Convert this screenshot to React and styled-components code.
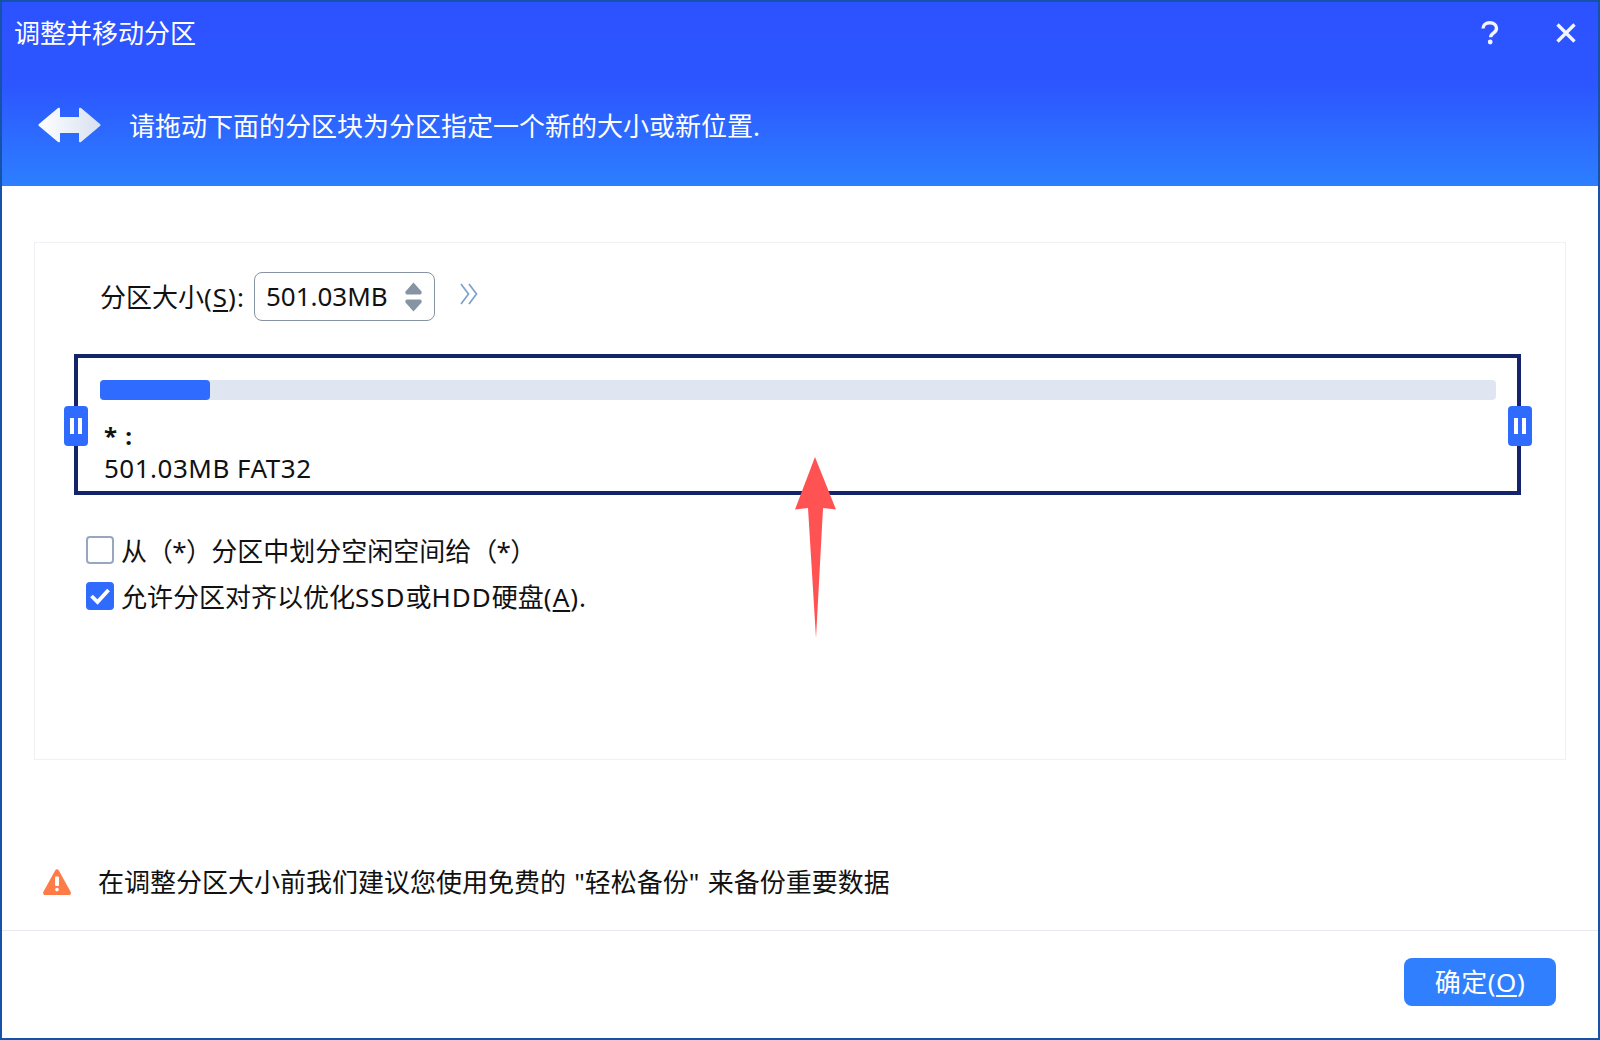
import React from "react";
import styled, { createGlobalStyle } from "styled-components";

const GlobalStyle = createGlobalStyle`
  html, body {
    margin: 0;
    padding: 0;
    background: #ffffff;
  }
  * {
    box-sizing: border-box;
  }
`;

const App = () => {
  return (
    <>
      <GlobalStyle />
      <Window>
        <Header>
          <TitleBar>
            <Title>调整并移动分区</Title>
            <WinButtons>
              <svg width="18" height="24" viewBox="0 0 18 24">
                <path d="M2 7.500C2 4 5 1.700 8.800 1.700c3.900 0 6.700 2.200 6.700 5.600 0 2.400-1.300 3.600-3.200 4.900-1.700 1.100-2.600 2-2.600 4.100" fill="none" stroke="#f2f4ff" strokeWidth="3.400" />
                <circle cx="9.200" cy="21" r="2.400" fill="#f2f4ff" />
              </svg>
              <svg width="20" height="20" viewBox="0 0 20 20">
                <path d="M1.500 1.500l17 17M18.500 1.500l-17 17" fill="none" stroke="#f2f4ff" strokeWidth="3.400" />
              </svg>
            </WinButtons>
          </TitleBar>
          <InfoRow>
            <svg width="63" height="36" viewBox="0 0 63 36">
              <defs>
                <linearGradient id="moveGrad" x1="0" x2="1" y1="0" y2="0">
                  <stop offset="0" stopColor="#ffffff" />
                  <stop offset="1" stopColor="#d8e0f0" />
                </linearGradient>
              </defs>
              <path
                d="M20 1L1 17c-.8.7-.8 1.400 0 2l19 16c.8.7 2 .3 2-.8V26h19v8.200c0 1.100 1.200 1.500 2 .8l19-16c.8-.6.8-1.300 0-2L43 1c-.8-.7-2-.3-2 .8V10H22V1.800C22 .7 20.800.3 20 1z"
                fill="url(#moveGrad)"
              />
            </svg>
            <InfoText>请拖动下面的分区块为分区指定一个新的大小或新位置.</InfoText>
          </InfoRow>
        </Header>

        <Body>
          <Panel>
            <SizeRow>
              <span>分区大小<Latin>(<u>S</u>):</Latin></span>
              <SizeInput>
                <SizeValue>501.03MB</SizeValue>
                <Spinner>
                  <svg width="17" height="13" viewBox="0 0 17 13">
                    <path d="M8.500 0.500L16.500 9.500Q17 12.500 15 12.500H2Q0 12.500 0.500 9.500Z" fill="#8593a3" />
                  </svg>
                  <svg width="17" height="13" viewBox="0 0 17 13">
                    <path d="M8.500 12.500L16.500 3.500Q17 0.500 15 0.500H2Q0 0.500 0.500 3.500Z" fill="#8593a3" />
                  </svg>
                </Spinner>
              </SizeInput>
              <MoreIcon width="18" height="22" viewBox="0 0 18 22">
                <path d="M1 1l7.500 10L1 21M9 1l7.500 10L9 21" fill="none" stroke="#7f9fce" strokeWidth="1.700" />
              </MoreIcon>
            </SizeRow>

            <PartitionBox>
              <UsageTrack>
                <UsageFill />
              </UsageTrack>
              <DriveName>* :</DriveName>
              <DriveInfo>501.03MB FAT32</DriveInfo>
              <Handle $side="left"><i /><i /></Handle>
              <Handle $side="right"><i /><i /></Handle>
            </PartitionBox>

            <Options>
              <Option>
                <CheckBox />
                <OptionText>从<Paren>（*）</Paren>分区中划分空闲空间给<Paren>（*）</Paren></OptionText>
              </Option>
              <Option>
                <CheckBox $checked>
                  <svg width="22" height="18" viewBox="0 0 22 18">
                    <path d="M2.500 9l6 6L19.500 3" fill="none" stroke="#ffffff" strokeWidth="3.800" />
                  </svg>
                </CheckBox>
                <OptionText>允许分区对齐以优化<Latin>SSD</Latin>或<Latin>HDD</Latin>硬盘<Latin>(<u>A</u>).</Latin></OptionText>
              </Option>
            </Options>
          </Panel>

          <Warning>
            <svg width="28" height="26" viewBox="0 0 28 26">
              <path
                d="M12.300 1.200c.8-1.400 2.600-1.400 3.400 0l11.900 21.600c.8 1.400-.1 3.200-1.700 3.200H2.100C.5 26-.4 24.200.4 22.800z"
                fill="#ff7b47"
              />
              <rect x="12" y="7.500" width="4" height="9.500" rx="1" fill="#ffffff" />
              <rect x="12.200" y="18.800" width="3.600" height="3.600" rx="1.800" fill="#ffffff" />
            </svg>
            <WarningText>在调整分区大小前我们建议您使用免费的 "轻松备份" 来备份重要数据</WarningText>
          </Warning>
        </Body>

        <Footer>
          <OkButton>确定(<u>O</u>)</OkButton>
        </Footer>

        <Arrow width="41" height="181" viewBox="0 0 41 181">
          <path d="M20 0L41 52.500 28 51 21 181 13 51 0 52.500z" fill="#ff5252" />
        </Arrow>
      </Window>
    </>
  );
};

export default App;

const Window = styled.div`
  position: relative;
  display: flex;
  flex-direction: column;
  width: 1600px;
  height: 1040px;
  overflow: hidden;
  border: 2px solid #1553ab;
  background: #ffffff;
  color: #111111;
  font-family: "Noto Sans", "Noto Sans CJK SC", sans-serif;
  font-size: 26px;
  line-height: 36px;
`;

const Header = styled.div`
  height: 184px;
  flex-shrink: 0;
  color: #ffffff;
  background: linear-gradient(180deg, #2c52ff 0%, #2c56ff 45%, #2d7fff 100%);
`;

const TitleBar = styled.div`
  display: flex;
  align-items: center;
  justify-content: space-between;
  height: 62px;
  padding: 0 22px 0 12px;
`;

const Title = styled.div`
  font-size: 26px;
`;

const WinButtons = styled.div`
  display: flex;
  align-items: center;
  gap: 57px;
`;

const InfoRow = styled.div`
  display: flex;
  align-items: center;
  gap: 28px;
  height: 36px;
  margin-top: 43px;
  padding-left: 36px;
`;

const InfoText = styled.div`
  margin-top: 2px;
  font-size: 26px;
`;

const Body = styled.div`
  flex: 1;
  display: flex;
  flex-direction: column;
  padding: 56px 32px 0;
`;

const Panel = styled.div`
  position: relative;
  height: 518px;
  border: 1px solid #f0f1f4;
  padding: 29px 44px 0 39px;
`;

const Latin = styled.span`
  letter-spacing: 1px;
`;

const SizeRow = styled.div`
  display: flex;
  align-items: center;
  height: 49px;
  padding-left: 26px;

  u {
    text-underline-offset: 3px;
  }
`;

const SizeInput = styled.div`
  display: flex;
  align-items: center;
  justify-content: space-between;
  width: 181px;
  height: 49px;
  margin-left: 9px;
  padding: 0 12px 0 11px;
  border: 1px solid #8593a3;
  border-radius: 8px;
`;

const SizeValue = styled.span`
  margin-top: -2px;
`;

const Spinner = styled.div`
  display: flex;
  flex-direction: column;
  gap: 4px;

  svg {
    display: block;
  }
`;

const MoreIcon = styled.svg`
  margin: -5px 0 0 25px;
`;

const PartitionBox = styled.div`
  position: relative;
  height: 141px;
  margin-top: 33px;
  padding: 22px 21px 0 22px;
  border: 4px solid #14246b;
`;

const UsageTrack = styled.div`
  height: 20px;
  border-radius: 4px;
  background: #e0e6f1;
`;

const UsageFill = styled.div`
  width: 110px;
  height: 100%;
  border-radius: 4px;
  background: #2f6bff;
`;

const DriveName = styled.div`
  margin: 21px 0 0 4px;
  font-size: 24px;
  font-weight: 700;
  letter-spacing: 1px;
  line-height: 30px;
`;

const DriveInfo = styled.div`
  margin-left: 4px;
  letter-spacing: 0.5px;
  line-height: 34px;
`;

const Handle = styled.div`
  position: absolute;
  top: 48px;
  ${(p) => (p.$side === "left" ? "left: -14px;" : "right: -15px;")}
  display: flex;
  align-items: center;
  justify-content: center;
  gap: 4px;
  width: 24px;
  height: 40px;
  border-radius: 4px;
  background: #2f6bff;

  i {
    display: block;
    width: 4px;
    height: 16px;
    background: #ffffff;
  }
`;

const Options = styled.div`
  display: flex;
  flex-direction: column;
  gap: 10px;
  margin: 37px 0 0 12px;
`;

const Option = styled.div`
  display: flex;
  align-items: center;
  gap: 7px;
  height: 36px;

  u {
    text-underline-offset: 3px;
  }
`;

const OptionText = styled.span`
  margin-top: 2px;
`;

const Paren = styled.span`
  letter-spacing: -0.7px;
`;

const CheckBox = styled.div`
  display: flex;
  align-items: center;
  justify-content: center;
  width: 28px;
  height: 28px;
  border-radius: 4px;
  border: ${(p) => (p.$checked ? "none" : "2px solid #98a6c0")};
  background: ${(p) => (p.$checked ? "#2f6bff" : "#ffffff")};
`;

const Warning = styled.div`
  display: flex;
  align-items: center;
  gap: 27px;
  height: 36px;
  margin: 104px 0 0 9px;
`;

const WarningText = styled.span`
  word-spacing: 1.5px;
`;

const Footer = styled.div`
  display: flex;
  justify-content: flex-end;
  height: 108px;
  flex-shrink: 0;
  padding: 27px 42px 0 0;
  border-top: 1px solid #e8e9ee;

  u {
    text-underline-offset: 3px;
  }
`;

const OkButton = styled.div`
  width: 152px;
  height: 48px;
  border-radius: 8px;
  background: #2f7fff;
  color: #ffffff;
  letter-spacing: 0.5px;
  text-align: center;
  line-height: 48px;
`;

const Arrow = styled.svg`
  position: absolute;
  left: 793px;
  top: 455px;
`;
